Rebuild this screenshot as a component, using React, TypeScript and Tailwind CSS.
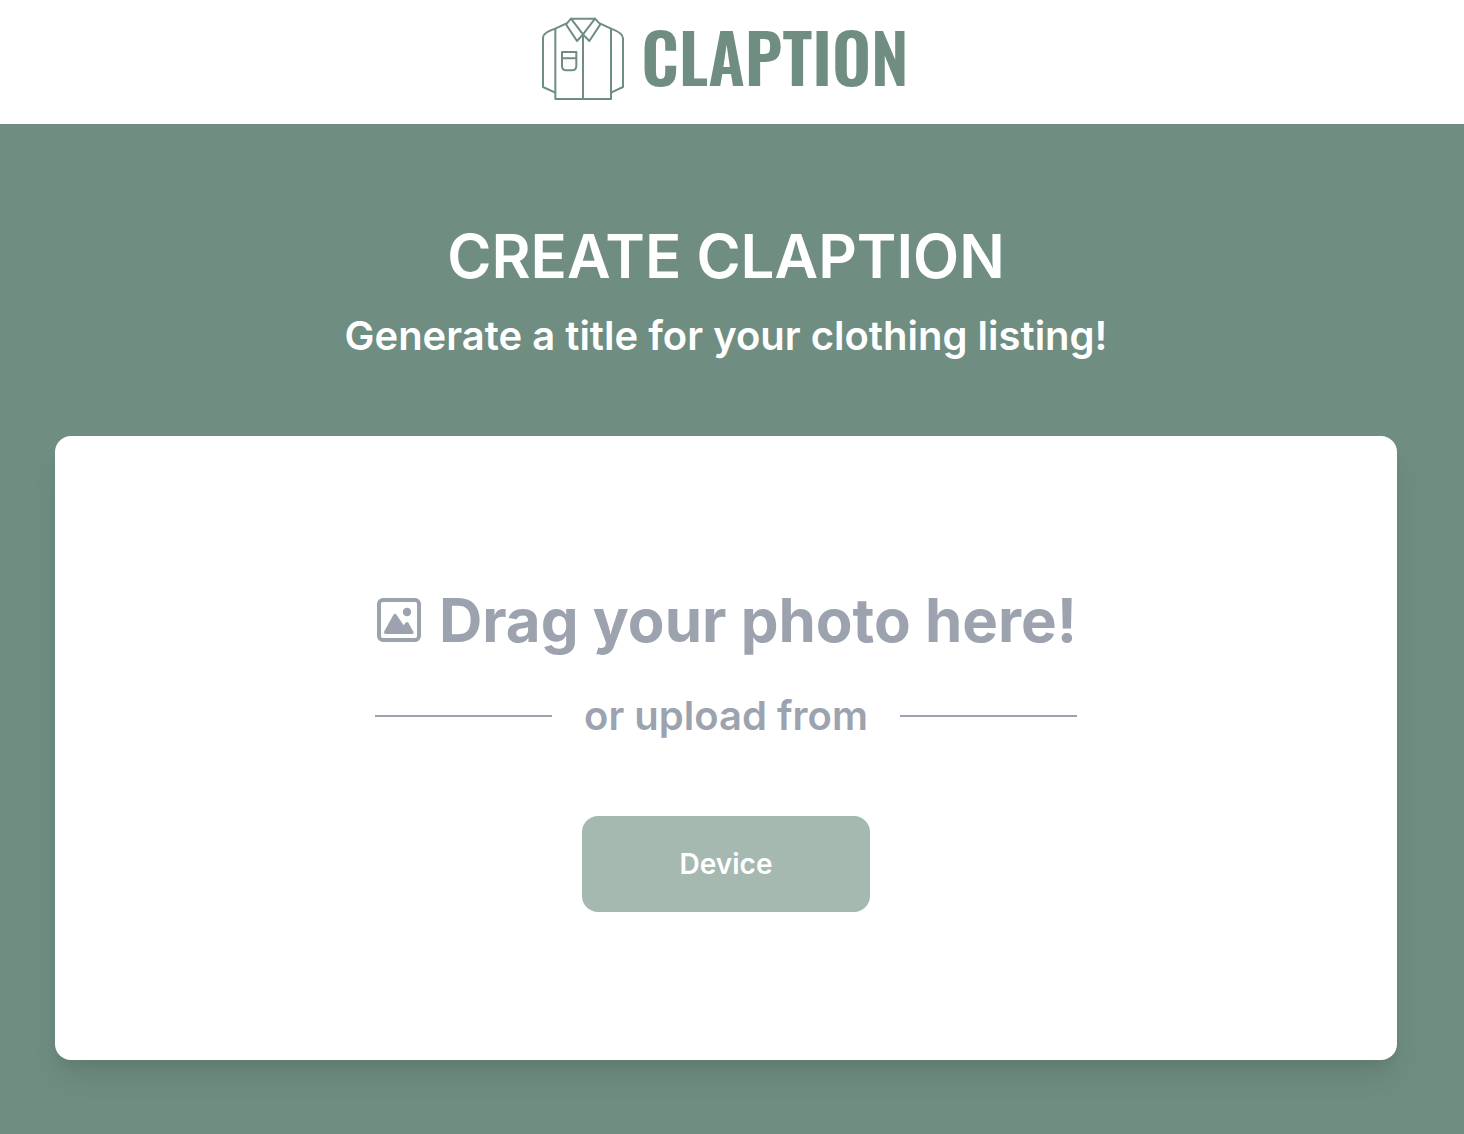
function ShirtIcon() {
  return (
    <svg
      viewBox="28 30 252 252"
      className="size-[84px] shrink-0"
      fill="none"
      stroke="#6f8d80"
      strokeWidth="6"
      strokeLinejoin="round"
      strokeLinecap="round"
      aria-hidden="true"
    >
      <path d="M71 65V276H238V65" />
      <path d="M103 50L71 65C52 72 34 78 34 94V240L71 257" />
      <path d="M206 50L238 65C257 72 274 80 274 94V240L238 257" />
      <path d="M118 35H190" />
      <path d="M118 35L103 52L136 102L154 82Z" />
      <path d="M190 35L206 52L173 102L154 82Z" />
      <path d="M154 82V276" />
      <path d="M91 135H134V176Q134 190 121 190H104Q91 190 91 176ZM91 154H134" />
    </svg>
  );
}

function PhotoIcon() {
  return (
    <svg viewBox="0 0 48 48" className="size-12 shrink-0" fill="currentColor" aria-hidden="true">
      <rect x="4" y="4" width="40" height="40" rx="4" fill="none" stroke="currentColor" strokeWidth="4" />
      <circle cx="32" cy="16" r="4.2" />
      <path d="M18.3 18.9Q20 16.8 21.7 18.9L28.6 29.2L30.6 26.8Q32 25.2 33.4 26.8L38.6 36Q39.2 38 37.2 38H11Q8.400 38 9.200 35.600Z" />
    </svg>
  );
}

export default function App() {
  return (
    <div className="flex min-h-screen flex-col bg-[#6f8d80] font-['Inter',sans-serif]">
      <header className="flex h-[124px] items-start justify-center bg-white pt-[17px] pr-[14px]">
        <a href="#" className="flex items-start gap-4 text-[#6f8d80]">
          <ShirtIcon />
          <span className="font-['Oswald','Roboto_Condensed',sans-serif] text-[68px] leading-[78px] font-semibold">
            CLAPTION
          </span>
        </a>
      </header>

      <main className="flex flex-1 flex-col pt-24 pr-[67px] pb-[74px] pl-[55px]">
        <div className="flex flex-col gap-4 text-center font-semibold text-white">
          <h1 className="text-[60px] leading-[72px]">CREATE CLAPTION</h1>
          <h2 className="text-[40px] leading-[56px]">Generate a title for your clothing listing!</h2>
        </div>

        <section className="mt-[72px] flex flex-col items-center rounded-2xl bg-white py-[148px] shadow-[0_20px_30px_-6px_rgb(0_0_0/0.1),0_8px_12px_-4px_rgb(0_0_0/0.05)]">
          <div className="flex flex-col gap-8 text-[#9ca3af]">
            <div className="flex items-center gap-4">
              <PhotoIcon />
              <p className="text-[60px] leading-[72px] font-bold">Drag your photo here!</p>
            </div>
            <div className="flex items-center gap-8">
              <span className="h-0.5 flex-1 bg-[#9ca3af]" />
              <p className="text-[40px] leading-[56px] font-semibold">or upload from</p>
              <span className="h-0.5 flex-1 bg-[#9ca3af]" />
            </div>
          </div>
          <button
            type="button"
            className="mt-[72px] h-24 w-72 rounded-2xl bg-[#a5b9b0] text-[28px] leading-10 font-semibold text-white"
          >
            Device
          </button>
        </section>
      </main>
    </div>
  );
}
